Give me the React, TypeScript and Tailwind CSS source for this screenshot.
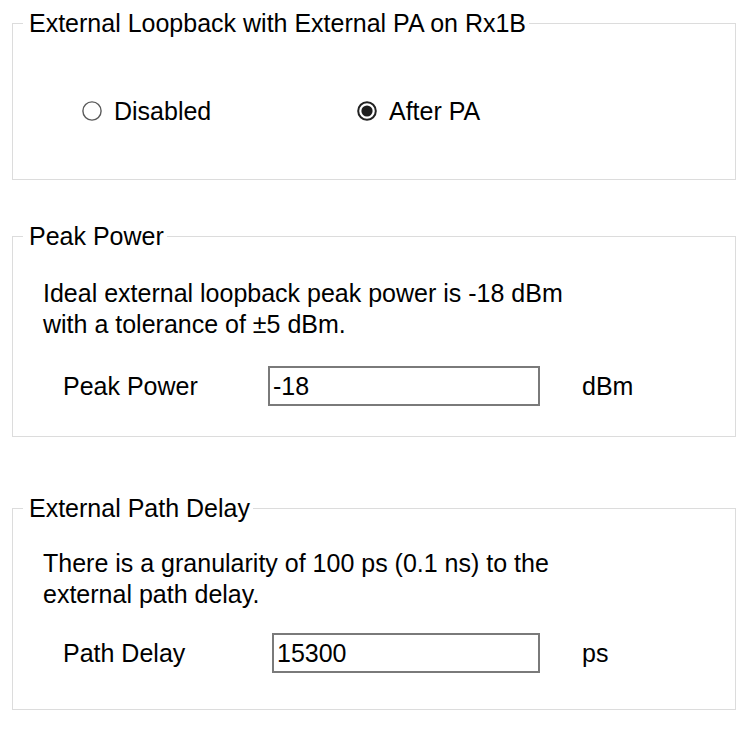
import React from 'react';

const Radio = ({ checked, label, className = '' }: { checked?: boolean; label: string; className?: string }) => (
  <label className={`flex items-center gap-[12px] ${className}`}>
    <svg width="20" height="20" viewBox="0 0 20 20">
      <circle
        cx="10"
        cy="10"
        r={checked ? 8.8 : 9.1}
        fill="white"
        stroke={checked ? '#222' : '#5a5a5a'}
        strokeWidth={checked ? 2 : 1.4}
      />
      {checked && <circle cx="10" cy="10" r="5.6" fill="#1e1e1e" />}
    </svg>
    <span>{label}</span>
  </label>
);

const Group = ({ title, className = '', children }: { title: string; className?: string; children: React.ReactNode }) => (
  <fieldset className={`ml-[12px] w-[724px] border border-[#dcdcdc] ${className}`}>
    <legend className="ml-[10px] pl-[6px] pr-[3px] leading-[28px]">{title}</legend>
    {children}
  </fieldset>
);

const Field = ({ label, value, unit, labelW, inputW }: { label: string; value: string; unit: string; labelW: string; inputW: string }) => (
  <div className="flex items-center pl-[50px]">
    <span className={labelW}>{label}</span>
    <input
      defaultValue={value}
      className={`${inputW} h-[40px] border-2 border-[#7a7a7a] bg-white pl-[3px] text-black outline-none`}
    />
    <span className="ml-[42px]">{unit}</span>
  </div>
);

export default function App() {
  return (
    <div
      className="w-[751px] h-[732px] bg-white pt-[9px] text-black text-[25px] leading-[28px]"
      style={{ fontFamily: '"Liberation Sans", Arial, sans-serif' }}
    >
      <Group title="External Loopback with External PA on Rx1B" className="pt-[60px] pb-[54px]">
        <div className="flex pl-[69px]">
          <Radio label="Disabled" className="w-[275px]" />
          <Radio label="After PA" checked />
        </div>
      </Group>

      <Group title="Peak Power" className="mt-[42px] pt-[28px] pb-[30px]">
        <p className="pl-[30px] leading-[31px]">
          Ideal external loopback peak power is -18 dBm
          <br />
          with a tolerance of ±5 dBm.
        </p>
        <div className="mt-[26px]">
          <Field label="Peak Power" value="-18" unit="dBm" labelW="w-[205px]" inputW="w-[272px]" />
        </div>
      </Group>

      <Group title="External Path Delay" className="mt-[57px] pt-[26px] pb-[36px]">
        <p className="pl-[30px] leading-[31px]">
          There is a granularity of 100 ps (0.1 ns) to the
          <br />
          external path delay.
        </p>
        <div className="mt-[23px]">
          <Field label="Path Delay" value="15300" unit="ps" labelW="w-[209px]" inputW="w-[268px]" />
        </div>
      </Group>
    </div>
  );
}
